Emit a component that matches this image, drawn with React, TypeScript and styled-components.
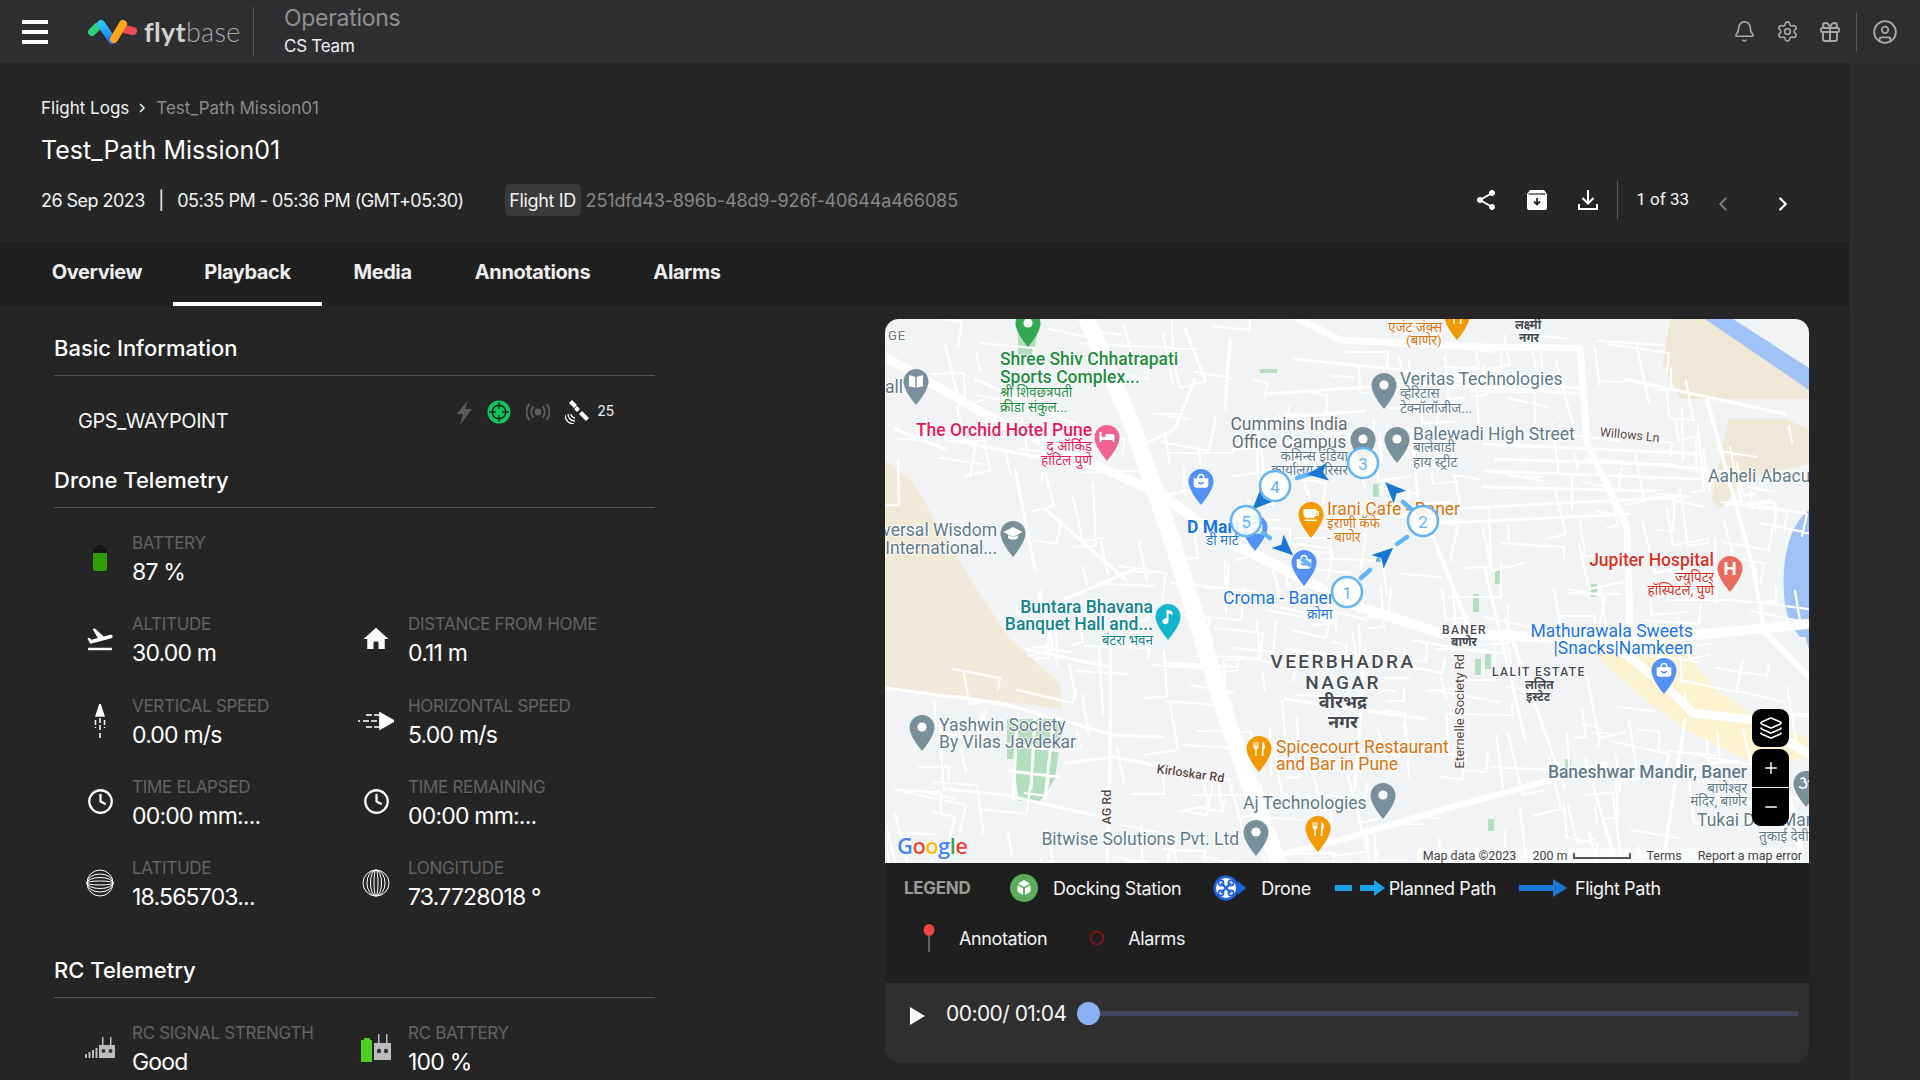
import React from "react";
import styled, { createGlobalStyle } from "styled-components";
import { Bell, Settings, Gift, CircleUser, Clock, Layers, Plus, Minus, ChevronLeft, ChevronRight } from "lucide-react";
import { MdShare, MdHome, MdFlightTakeoff } from "react-icons/md";

const Global = createGlobalStyle`
  html, body { margin: 0; padding: 0; background: #252525; overflow: hidden; }
  body { font-family: Inter, "Noto Sans", sans-serif; width: 1920px; height: 1080px; }
  * { box-sizing: border-box; }
`;

const Page = styled.div`width: 1920px; height: 1080px; overflow: hidden; display: flex; flex-direction: column; background: #2c2c2e;`;
const TopBar = styled.header`height: 63px; flex: none; background: #2e2e30; display: flex; align-items: center;`;
const Burger = styled.div`width: 26px; margin-left: 22px; display: flex; flex-direction: column; gap: 6px; & > i { display: block; height: 4px; background: #fff; }`;
const LogoBox = styled.div`margin-left: 40px; display: flex; align-items: center; width: 165px; gap: 6px;`;
const LogoText = styled.span`font-family: Lato, sans-serif; font-size: 27px; font-weight: 300; color: #a9a9a9; letter-spacing: 0.3px; b { font-weight: 700; color: #d2d2d2; }`;
const VDivider = styled.div<{ $h: number; $ml: number }>`width: 1px; height: ${p => p.$h}px; margin-left: ${p => p.$ml}px; background: #5a5a5a; flex: none;`;
const OrgBlock = styled.div`margin-left: 30px; display: flex; flex-direction: column; gap: 5px; margin-top: -2px;`;
const OrgTitle = styled.div`font-size: 23px; line-height: 26px; color: #8f8f8f; letter-spacing: -0.3px;`;
const OrgSub = styled.div`font-size: 17px; line-height: 20px; color: #f0f0f0; letter-spacing: -0.25px;`;
const TopIcons = styled.div`margin-left: auto; padding-right: 7px; display: flex; align-items: center; color: #a8a8a8;`;
const TopIcon = styled.div<{ $w: number }>`width: ${p => p.$w}px; display: flex; justify-content: center;`;

const Body = styled.div`flex: 1; display: flex; min-height: 0;`;
const Main = styled.main`width: 1849px; flex: none; background: #252525; display: flex; flex-direction: column;`;
const SubHeader = styled.section`height: 179px; flex: none; padding: 33px 51px 0 41px; background: #262626;`;
const Crumbs = styled.div`font-size: 17px; line-height: 24px; color: #f2f2f2; letter-spacing: 0; display: flex; align-items: center; gap: 10px; span { color: #8c8c8c; }`;
const Title = styled.h1`margin: 12px 0 0; font-size: 25px; line-height: 36px; font-weight: 400; color: #fff; letter-spacing: 0;`;
const InfoRow = styled.div`margin-top: 16px; height: 32px; display: flex; align-items: center; color: #f2f2f2; font-size: 18px; letter-spacing: -0.55px;`;
const Chip = styled.span`margin-left: 41px; height: 32px; width: 76px; display: flex; align-items: center; justify-content: center; background: #3a3a3a; border-radius: 5px; white-space: nowrap; letter-spacing: -0.35px;`;
const IdValue = styled.span`margin-left: 5px; color: #868686; letter-spacing: -0.13px;`;
const Actions = styled.div`margin-left: auto; display: flex; align-items: center; color: #fff;`;
const ActionIcon = styled.div`width: 51px; display: flex; justify-content: center;`;
const Pager = styled.span`font-family: Roboto, sans-serif; font-size: 17px; margin: 0 19px 0 18px; letter-spacing: 0; color: #f4f4f4; position: relative; top: -1px;`;
const PagerBtn = styled.div<{ $on?: boolean; $w: number; $ml?: number }>`width: ${p => p.$w}px; margin-left: ${p => p.$ml ?? 0}px; display: flex; justify-content: center; color: ${p => (p.$on ? "#fff" : "#777")}; position: relative; top: 4px;`;

const Tabs = styled.nav`height: 64px; flex: none; background: #1f1f1f; padding-left: 21px; display: flex;`;
const Tab = styled.div<{ $on?: boolean; $w: number }>`width: ${p => p.$w}px; display: flex; align-items: center; justify-content: center; font-size: 20px; font-weight: 700; color: #eee; letter-spacing: -0.4px; border-bottom: 4px solid ${p => (p.$on ? "#fff" : "transparent")};`;

const Content = styled.div`flex: 1; min-height: 0; display: grid; grid-template-columns: 885px 924px;`;
const LeftPanel = styled.section`padding: 24px 0 0 54px; width: 655px;`;
const SectionHead = styled.h2<{ $mt?: number }>`margin: ${p => p.$mt ?? 0}px 0 0; font-size: 22px; font-weight: 500; line-height: 36px; padding-bottom: 9px; color: #fff; letter-spacing: 0; border-bottom: 1px solid #555;`;
const ModeRow = styled.div`height: 86px; position: relative; display: flex; padding: 31px 0 0 24px; justify-content: space-between;`;
const ModeText = styled.div`font-size: 20px; line-height: 28px; color: #f5f5f5; letter-spacing: -0.45px;`;
const StatusIcons = styled.div`display: flex; align-items: center; height: 30px; gap: 15px; margin: -10px 41px 0 0; color: #fff;`;
const SatCount = styled.span`font-size: 14px; color: #eee; margin-left: -7px; letter-spacing: -0.2px; position: relative; top: -2px;`;
const Stats = styled.div`padding: 25px 0 0 22px; display: grid; grid-template-columns: 276px 1fr; grid-auto-rows: 81.33px;`;
const Stat = styled.div`display: flex;`;
const StatIcon = styled.div`width: 48px; height: 50px; margin: 0 8px 0 0; display: flex; align-items: center; justify-content: center; color: #fff; flex: none;`;
const StatLabel = styled.div`font-size: 17px; line-height: 20px; color: #636363; letter-spacing: -0.3px; white-space: nowrap;`;
const StatValue = styled.div`font-size: 23px; line-height: 30px; margin-top: 4px; color: #fff; letter-spacing: -0.8px; white-space: nowrap;`;

const RightPanel = styled.section`padding-top: 13px; display: flex; flex-direction: column;`;
const MapFrame = styled.div`height: 544px; position: relative; overflow: hidden; background: #f1f3f4; border-radius: 14px 14px 0 0; font-family: Roboto, "Noto Sans", "Noto Sans Devanagari", sans-serif;`;
const MapArt = styled.svg`position: absolute; inset: 0; display: block;`;
const halo = "-1px 0 1px #fff,1px 0 1px #fff,0 -1px 1px #fff,0 1px 1px #fff";
const MapLabel = styled.div<{ $x: number; $y: number; $c: string; $s: number; $a: string; $w: number; $rot: number; $sp: number }>`
  position: absolute; left: ${p => p.$x}px; top: ${p => p.$y - (p.$s >= 17 ? 1 : 3)}px; color: ${p => p.$c}; font-size: ${p => p.$s}px; font-weight: ${p => p.$w};
  line-height: 17px; white-space: nowrap; letter-spacing: ${p => p.$sp}px; text-shadow: ${halo};
  transform: translateX(${p => (p.$a === "r" ? "-100%" : p.$a === "c" ? "-50%" : "0")}) rotate(${p => p.$rot}deg);
  transform-origin: ${p => (p.$a === "r" ? "right" : "left")} center;
`;
const GoogleMark = styled.div`position: absolute; left: 12px; top: 513px; font-family: "Open Sans", sans-serif; font-size: 22px; font-weight: 600; letter-spacing: -0.6px; line-height: 26px; text-shadow: ${halo};`;
const G = styled.span<{ $c: string }>`color: ${p => p.$c};`;
const Attribution = styled.div`position: absolute; right: 7px; bottom: 0; height: 15px; display: flex; align-items: center; gap: 16px; font-size: 12.5px; color: #444; background: rgba(255,255,255,.55); padding-left: 6px;`;
const Scale = styled.span`display: flex; align-items: center; gap: 5px;`;
const ScaleBar = styled.i`display: block; width: 58px; height: 6px; border: 2px solid #555; border-top: 0;`;
const MapControls = styled.div`position: absolute; left: 867px; top: 390px; display: flex; flex-direction: column; gap: 2px;`;
const MapBtn = styled.div<{ $h: number; $r: string; $bb?: boolean; $mt?: number }>`width: 37px; height: ${p => p.$h}px; margin-top: ${p => p.$mt ?? 0}px; background: #000; border-radius: ${p => p.$r}; color: #fff; display: flex; align-items: center; justify-content: center; border-bottom: ${p => (p.$bb ? "1px solid #eee" : "0")};`;

const Legend = styled.div`height: 120px; flex: none; background: #1f1f1f; padding: 7px 0 0 19px; display: flex; flex-direction: column; font-size: 18px; color: #f5f5f5; letter-spacing: -0.4px;`;
const LegendRow = styled.div<{ $pl?: number; $mt?: number }>`height: 36px; display: flex; align-items: center; padding-left: ${p => p.$pl ?? 0}px; margin-top: ${p => p.$mt ?? 0}px;`;
const LegendHead = styled.span`font-weight: 700; font-size: 17px; color: #9a9a9a; letter-spacing: -0.3px; width: 106px;`;
const LegendItem = styled.span<{ $ml: number; $gap: number }>`display: flex; align-items: center; gap: ${p => p.$gap}px; margin-left: ${p => p.$ml}px; white-space: nowrap;`;
const Player = styled.div`height: 80px; flex: none; background: #2f2f2f; border-radius: 0 0 16px 16px; display: flex; align-items: center; padding: 0 10px 20px 25px;`;
const PlayMark = styled.svg`flex: none; margin-top: 5px;`;
const TimeText = styled.span`margin-left: 21px; width: 131px; font-size: 21px; color: #f5f5f5; letter-spacing: -0.55px; white-space: nowrap;`;
const Track = styled.div`flex: 1; height: 5px; background: #3f4659; border-radius: 3px; position: relative;`;
const Thumb = styled.div`position: absolute; left: 0; top: -9px; width: 23px; height: 23px; border-radius: 50%; background: #8ab0f5;`;
const SideStrip = styled.aside`flex: 1; background: #2c2c2e;`;

/* map data */
const pinPath = "M12.5 0C5.6 0 0 5.6 0 12.5 0 21.5 12.5 36 12.5 36S25 21.5 25 12.5C25 5.6 19.4 0 12.5 0Z";
type PinKind = "dot" | "book" | "bed" | "bag" | "cap" | "cup" | "fork" | "note" | "h" | "om";
const pins: [number, number, string, PinKind][] = [
  [143, 28, "#34a853", "dot"], [31, 86, "#78909c", "book"], [222, 142, "#f06292", "bed"], [316, 186, "#5491f5", "bag"],
  [128, 238, "#78909c", "cap"], [370, 232, "#5491f5", "bag"], [426, 219, "#f29900", "cup"], [419, 267, "#5491f5", "bag"],
  [283, 321, "#12b5cb", "note"], [572, 21, "#f29900", "fork"], [499, 90, "#78909c", "dot"], [478, 144, "#78909c", "dot"],
  [512, 144, "#78909c", "dot"], [845, 273, "#ea6a5e", "h"], [37, 432, "#78909c", "dot"], [374, 453, "#f29900", "fork"],
  [371, 537, "#78909c", "dot"], [433, 533, "#f29900", "fork"], [779, 375, "#5491f5", "bag"], [498, 500, "#78909c", "dot"],
  [921, 488, "#78909c", "om"],
];
const PinGlyph = ({ k }: { k: PinKind }) => {
  switch (k) {
    case "dot": return <circle cx="12.5" cy="12" r="4.6" fill="#fff" />;
    case "book": return <path d="M5.5 6.5c2.5 0 5 .5 6.3 1.6V19c-1.4-1-3.8-1.5-6.3-1.5ZM19.5 6.5c-2.5 0-5 .5-6.3 1.6V19c1.4-1 3.8-1.5 6.3-1.5Z" fill="#fff" />;
    case "bed": return <path d="M5 7h2v5h4V9h7a2 2 0 0 1 2 2v6h-2v-2H7v2H5Z" fill="#fff" />;
    case "bag": return <g fill="none" stroke="#fff" strokeWidth="1.6"><path d="M6 10h13v6a2 2 0 0 1-2 2H8a2 2 0 0 1-2-2Z" fill="#fff" /><path d="M9.5 10c0-6 6-6 6 0" /><path d="M10 13c.8 2.2 4.2 2.2 5 0" stroke="#5491f5" /></g>;
    case "cap": return <path d="M12.5 6 22 11l-9.5 5L3 11Zm-5 8v3c2.5 2 7.500 2 10 0v-3l-5 2.600Z" fill="#fff" />;
    case "cup": return <path d="M5 7h13v2h2.500v5H17c-.5 1.500-1.500 2-3 2H9c-3 0-4-2-4-4Zm13 3.500V13h1v-2.500ZM6 17.500h12V19H6Z" fill="#fff" />;
    case "fork": return <path d="M7 6h1v4h1V6h1v4h1V6h1v5c0 1.200-1 2-1.800 2.200V20H8.800v-6.800C8 13 7 12.200 7 11Zm9-.000c1.500 0 2.500 2 2.500 5 0 1.500-.8 2.500-1.500 2.800V20h-1.800Z" fill="#fff" />;
    case "note": return <path d="M11 6v8.500a3 3 0 1 0 2 2.800V9.500c1.500 0 3 .7 4 2V8c-1.500-1.500-3.500-2-6-2Z" fill="#fff" />;
    case "h": return <path d="M7 6h2.800v5h5.400V6H18v13h-2.800v-5.500H9.800V19H7Z" fill="#fff" />;
    case "om": return <path d="M7 8c3-2 6 0 4 3 3 0 3 6-1 6s-4-2-4-2M14 11c2-2 5 0 5 3s-2 4-3 3" fill="none" stroke="#fff" strokeWidth="1.700" />;
  }
};

type L = [string, number, number, string, number?, string?, number?, number?, number?];
const slate = "#5f7a8a";
const green = "#1e8e3e";
const pink = "#e8175d";
const orange = "#d9730d";
const blue = "#1a73e8";
const teal = "#12858e";
const red = "#d93025";
const brown = "#5b4343";
const ink = "#444b52";
const H = 13.5;
const labels: L[] = [
  ["GE", 3, 11, "#70757a", 13, "l", 400, 0, 1],
  ["all", 0, 61, slate, 17.5],
  ["Shree Shiv Chhatrapati", 115, 33, green, 17.5, "l", 500], ["Sports Complex...", 115, 51, green, 17.5, "l", 500],
  ["श्री शिवछत्रपती", 115, 68, green, H], ["क्रीडा संकुल...", 115, 83, green, H],
  ["The Orchid Hotel Pune", 207, 104, pink, 17.5, "r", 500],
  ["द ऑर्किड", 207, 122, pink, H, "r"], ["हॉटिल पुणे", 207, 136, pink, H, "r"],
  ["Cummins India", 404, 98, "#5f6d78", 17.5, "c"], ["Office Campus", 404, 116, "#5f6d78", 17.5, "c"],
  ["कमिन्स इंडिया", 463, 132, slate, H, "r"], ["कार्यालय परिसर", 463, 146, slate, H, "r"],
  ["versal Wisdom", 112, 204, slate, 17.5, "r"], ["(International...", 112, 222, slate, 17.5, "r"],
  ["D Mart", 302, 201, blue, 17.5, "l", 700], ["डी मार्ट", 321, 216, blue, H],
  ["Croma - Baner", 338, 272, blue, 17.5], ["क्रोमा", 422, 290, blue, H],
  ["Irani Cafe - Baner", 442, 183, orange, 17.5], ["इराणी कॅफे", 442, 199, orange, H], ["- बाणेर", 442, 213, orange, H],
  ["Buntara Bhavana", 268, 281, teal, 17.5, "r", 500], ["Banquet Hall and...", 268, 298, teal, 17.5, "r", 500], ["बंटरा भवन", 268, 316, teal, H, "r"],
  ["Veritas Technologies", 515, 53, slate, 17.5], ["व्हेरिटास", 515, 69, slate, H], ["टेक्नॉलॉजीज...", 515, 84, slate, H],
  ["Balewadi High Street", 528, 108, slate, 17.5], ["बालेवाडी", 528, 123, slate, H], ["हाय स्ट्रीट", 528, 138, slate, H],
  ["Willows Ln", 715, 107, brown, 12.5, "l", 400, 6],
  ["Aaheli Abacus", 823, 150, slate, 17.5],
  ["Jupiter Hospital", 829, 234, red, 17.5, "r", 500], ["ज्युपिटर", 829, 253, red, H, "r"], ["हॉस्पिटल, पुणे", 829, 266, red, H, "r"],
  ["एजंट जंक्स", 503, 3, orange, H], ["(बाणेर)", 521, 16, orange, H],
  ["लक्ष्मी", 630, 1, ink, 12, "l", 700], ["नगर", 634, 14, ink, 12, "l", 700],
  ["BANER", 557, 306, ink, 12, "l", 500, 0, 1.3], ["बाणेर", 566, 318, ink, 12, "l", 700],
  ["VEERBHADRA", 458, 335, ink, 19, "c", 500, 0, 2.4], ["NAGAR", 458, 356, ink, 19, "c", 500, 0, 2.4],
  ["वीरभद्र", 458, 375, ink, 18, "c", 700], ["नगर", 458, 395, ink, 18, "c", 700],
  ["Mathurawala Sweets", 808, 305, blue, 17.5, "r"], ["|Snacks|Namkeen", 808, 322, blue, 17.5, "r"],
  ["LALIT ESTATE", 607, 348, ink, 12, "l", 500, 0, 1.45], ["ललित", 640, 361, ink, 12, "l", 700], ["इस्टेट", 641, 373, ink, 12, "l", 700],
  ["Eternelle Society Rd", 574, 444, brown, 13, "l", 400, -90],
  ["Spicecourt Restaurant", 391, 421, orange, 17.5], ["and Bar in Pune", 391, 438, orange, 17.5],
  ["Yashwin Society", 54, 399, slate, 17.5], ["By Vilas Javdekar", 54, 416, slate, 17.5],
  ["Kirloskar Rd", 272, 444, brown, 12.5, "l", 500, 8],
  ["AG Rd", 221, 500, brown, 12.5, "l", 500, -90],
  ["Aj Technologies", 358, 477, slate, 17.5],
  ["Bitwise Solutions Pvt. Ltd", 354, 513, slate, 17.5, "r"],
  ["Baneshwar Mandir, Baner", 862, 446, slate, 17.5, "r", 500], ["बाणेश्वर", 862, 464, slate, H, "r"], ["मंदिर, बाणेर", 862, 477, slate, H, "r"],
  ["Tukai Devi Mandir", 812, 494, slate, 17.5], ["तुकाई देवी", 874, 512, slate, H],
];

/* deterministic street clutter */
function makeStreets(): string {
  let seed = 1337;
  const r = () => ((seed = (seed * 16807) % 2147483647) / 2147483647);
  let d = "";
  for (let i = 0; i < 420; i++) {
    const x = r() * 924, y = r() * 544;
    if ((x < 110 && y > 150 && y < 330) || (x > 820 && y < 80)) continue;
    const a = (r() < 0.5 ? 6 : 82) * (Math.PI / 180) + (r() - 0.5) * 0.25;
    const len = 14 + r() * 52;
    const x2 = x + Math.cos(a) * len, y2 = y + Math.sin(a) * len;
    d += `M${x.toFixed(0)} ${y.toFixed(0)}L${x2.toFixed(0)} ${y2.toFixed(0)}`;
    if (r() < 0.55) {
      const l2 = 10 + r() * 26, s = r() < 0.5 ? -1 : 1;
      d += `L${(x2 - s * Math.sin(a) * l2).toFixed(0)} ${(y2 + s * Math.cos(a) * l2).toFixed(0)}`;
    }
  }
  return d;
}
const streets = makeStreets();
const midStreets = "M598 125L818 135M610 140L790 146M600 152L815 160M598 168L770 172M560 190L800 178M540 205L745 195M700 140L820 150M740 60L900 95M510 62L700 75M410 40L700 70M380 75L600 60M380 100L480 92M350 130L470 118M0 369L120 385L228 416L278 418M181 444L228 438L345 461M226 301L225 441L222 544M140 330L226 348M60 470L120 476L226 500M400 330L520 345M400 380L540 400M600 250L640 420M620 300L680 470M700 440L730 540M800 400L780 530M480 330L470 470M90 60L190 105M60 120L215 150M10 110L60 130M130 150L150 250M160 190L240 260M180 280L250 250M250 130L290 110L310 60M300 10L320 60M345 20L340 90M132 404L128 480M150 400L146 470M168 405L160 480M122 425L178 432M125 452L175 458";

const Arrow = ({ x, y, a }: { x: number; y: number; a: number }) => (
  <path d="M11 0-10-9-5 0-10 9Z" fill="#1976d2" transform={`translate(${x} ${y}) rotate(${a})`} />
);
const Marker = ({ x, y, n }: { x: number; y: number; n: number }) => (
  <g>
    <circle cx={x} cy={y} r="15" fill="rgba(255,255,255,.88)" stroke="#64b5f6" strokeWidth="2.6" />
    <text x={x} y={y + 6.500} fontSize="17" textAnchor="middle" fill="#64b5f6" fontFamily="Roboto, sans-serif">{n}</text>
  </g>
);

const MapBase = () => (
  <MapArt width="924" height="544" viewBox="0 0 924 544">
    <path d="M0 141 28 163 85 260 125 320 175 365 177 390 100 380 0 368Z" fill="#f2ead9" />
    <path d="M785 0H822L924 50V80L795 80 778 45ZM844 100H900L924 110V145L860 160 835 190 826 180Z" fill="#f0e8d6" />
    <path d="M820 0H848L924 49V71Z" fill="#9fc2f7" />
    <path d="M924 191C905 205 895 240 900 285 903 300 905 306 912 306L924 300ZM905 305L924 300V318H915Z" fill="#9fc2f7" />
    <path d="M918 310H924V330Z" fill="#9fc2f7" />
    <path d="M700 320H790L830 370 868 395 924 420V440H860L820 420 800 410 760 380 720 345Z" fill="#fdf1c9" opacity=".85" />
    <path d="M133 8H153L149 36H133ZM122 400H178L170 460 155 482H134L128 440 122 440Z M375 50H392V54H375ZM488 165H494V178H488ZM600 335H606V350H600ZM610 250H615V265H610Z M590 340H596V356H590Z M588 275H594V293H588ZM706 265H712V278H706ZM680 440H686V452H680Z M603 500H609V512H603Z" fill="#a8dab5" opacity=".85" />
    <path d={streets} fill="none" stroke="#fff" strokeWidth="2.200" strokeLinecap="round" strokeLinejoin="round" />
    <path d={midStreets} fill="none" stroke="#fff" strokeWidth="3" strokeLinecap="round" strokeLinejoin="round" />
    <g fill="none" stroke="#fff" strokeLinecap="round" strokeLinejoin="round">
      <path d="M-5 35 100 95 195 140 242 160" strokeWidth="9" />
      <path d="M242 160 275 174 328 214 445 274 475 288 555 314 748 322 922 305" strokeWidth="10" />
      <path d="M408 -3 455 21 600 28 695 29 702 124 742 208 745 311" strokeWidth="7" />
      <path d="M722 321 782 368 808 394 868 401 925 436" strokeWidth="9" />
      <path d="M391 537 455 521 560 490 655 464 720 445" strokeWidth="6" />
      <path d="M878 311 924 358" strokeWidth="6" />
      <path d="M822 81 868 248 880 315M548 218 585 311" strokeWidth="4" />
      <path d="M200 -5 248 108 288 224 315 311 342 401 395 550" strokeWidth="17" />
    </g>
  </MapArt>
);

const MapOverlay = () => (
  <MapArt width="924" height="544" viewBox="0 0 924 544">
    {pins.map(([x, y, c, k], i) => (
      <g key={i} transform={`translate(${x - 12.500} ${y - 36})`}>
        <path d={pinPath} fill={c} />
        <PinGlyph k={k} />
      </g>
    ))}
  </MapArt>
);
const PathOverlay = () => (
  <MapArt width="924" height="544" viewBox="0 0 924 544">
    <g stroke="#64b5f6" strokeWidth="4.500" strokeLinecap="round">
      <path d="M476 259 485 251M512 225 522 218M493 241h.5M518 183 527 191M412 159 428 154M378 181h.5M378 214 385 219M418 241 425 246" />
    </g>
    <Arrow x={500} y={236} a={-42} />
    <Arrow x={508} y={171} a={-135} />
    <Arrow x={433} y={154} a={172} />
    <Arrow x={375} y={183} a={135} />
    <Arrow x={400} y={229} a={42} />
    <Marker x={462} y={273} n={1} />
    <Marker x={538} y={202} n={2} />
    <Marker x={478} y={144} n={3} />
    <Marker x={390} y={167} n={4} />
    <Marker x={361} y={202} n={5} />
  </MapArt>
);

const Logo = () => (
  <svg width="50" height="26" viewBox="0 0 50 26" fill="none" strokeWidth="8" strokeLinecap="round">
    <defs>
      <linearGradient id="lgb" x1="0" x2="0" y1="0" y2="1">
        <stop offset="0" stopColor="#29c8f0" />
        <stop offset="1" stopColor="#1e78ee" />
      </linearGradient>
    </defs>
    <path d="M4 13 9 8" stroke="#2fd07a" />
    <path d="M13 5 24 21" stroke="url(#lgb)" />
    <path d="M36 10 45 12" stroke="#ee4c55" />
    <path d="M26 20 35 5" stroke="#ffa41c" />
  </svg>
);
const ArchiveIcon = () => (
  <svg width="20" height="20" viewBox="0 0 20 20">
    <path d="M3 0h14l3 4v14a2 2 0 0 1-2 2H2a2 2 0 0 1-2-2V4Z" fill="#fff" />
    <path d="M1.500 4h17" stroke="#262626" strokeWidth="1.200" />
    <path d="M10 8v6M7 11.500l3 3 3-3" fill="none" stroke="#262626" strokeWidth="1.800" />
  </svg>
);
const DownloadIcon = () => (
  <svg width="20" height="20" viewBox="0 0 20 20" fill="none" stroke="#fff" strokeWidth="2">
    <path d="M10 0v13M4.500 8l5.500 5.500L15.500 8M1 14v5h18v-5" />
  </svg>
);
const Bolt = () => <svg width="15" height="25" viewBox="0 0 15 25"><path d="M11 0 0 14h6L3 25 15 9H8Z" fill="#5a5a5a" /></svg>;
const Target = () => (
  <svg width="24" height="24" viewBox="0 0 24 24">
    <circle cx="12" cy="12" r="11.500" fill="#12c45a" />
    <circle cx="12" cy="12" r="6.800" fill="none" stroke="#1c1c1c" strokeWidth="1.400" />
    <circle cx="12" cy="12" r="2.600" fill="#12c45a" />
    <path d="M12 2v7M12 15v7M2 12h7M15 12h7" stroke="#1c1c1c" strokeWidth="1.300" />
  </svg>
);
const Radio = () => (
  <svg width="24" height="18" viewBox="0 0 24 18" fill="none" stroke="#5f5f5f" strokeWidth="1.800">
    <circle cx="12" cy="9" r="2.500" fill="#5f5f5f" />
    <path d="M7.500 3.500c-3 3-3 8 0 11M16.500 3.500c3 3 3 8 0 11M3.500 1c-4 4-4 12 0 16M20.500 1c4 4 4 12 0 16" />
  </svg>
);
const Sat = () => (
  <svg width="24" height="24" viewBox="0 0 24 24">
    <path d="M4 3 7 0l5 5-3 3ZM9 9l3-3 3 3-3 3ZM14 14l3-3 7 7-3 3-7-7Z" fill="#fff" />
    <path d="M3 14c0 4 3 7 7 7M0 15c0 5 4 9 9 9M6 14c0 2 2 4 4 4" fill="none" stroke="#fff" strokeWidth="1.300" />
  </svg>
);
const BatteryIcon = () => (
  <svg width="14" height="26" viewBox="0 0 14 26">
    <path d="M4 0h6v3h2a2 2 0 0 1 2 2v3H0V5a2 2 0 0 1 2-2h2Z" fill="#151515" />
    <path d="M0 8h14v16a2 2 0 0 1-2 2H2a2 2 0 0 1-2-2Z" fill="#2e9e04" />
  </svg>
);
const VSpeed = () => (
  <svg width="14" height="34" viewBox="0 0 14 34" fill="none" stroke="#fff" strokeWidth="1.500">
    <path d="M7 0 11 12H3Z" fill="#fff" />
    <path d="M7 14v12M2.500 16v8M11.500 16v8" strokeDasharray="5 2" />
    <path d="M7 29v5" />
  </svg>
);
const HSpeed = () => (
  <svg width="36" height="18" viewBox="0 0 36 18" fill="none" stroke="#fff" strokeWidth="1.700">
    <path d="M36 9 22 17V1Z" fill="#fff" />
    <path d="M8 3h14M0 9h2M5 9h17M8 15h14" strokeDasharray="6 2" />
  </svg>
);
const GlobeLat = () => (
  <svg width="28" height="28" viewBox="0 0 28 28" fill="none" stroke="#fff" strokeWidth="1">
    <circle cx="14" cy="14" r="13" />
    <ellipse cx="14" cy="14" rx="13" ry="2" /><ellipse cx="14" cy="14" rx="13" ry="5.500" /><ellipse cx="14" cy="14" rx="13" ry="9" />
  </svg>
);
const GlobeLng = () => (
  <svg width="28" height="28" viewBox="0 0 28 28" fill="none" stroke="#fff" strokeWidth="1">
    <circle cx="14" cy="14" r="13" />
    <ellipse cx="14" cy="14" rx="2" ry="13" /><ellipse cx="14" cy="14" rx="5.500" ry="13" /><ellipse cx="14" cy="14" rx="9" ry="13" />
  </svg>
);
const RcSignal = () => (
  <svg width="30" height="22" viewBox="0 0 30 22" fill="#bcbcbc">
    <path d="M0 17h2v4H0ZM3.500 15h2v6h-2ZM7 13h2v8H7ZM10.500 11h2v10h-2Z" />
    <path d="M14 8h16v13H14Z" />
    <path d="M17 0h1.500v8H17ZM25 0h1.500v8H25Z" />
    <circle cx="18.500" cy="14" r="2" fill="#333" /><circle cx="25.500" cy="14" r="2" fill="#333" />
  </svg>
);
const RcBattery = () => (
  <svg width="30" height="28" viewBox="0 0 30 28">
    <path d="M3 4h6v2h2v22H0V6h3Z" fill="#4fcf26" />
    <path d="M13 9h17v17H13Z" fill="#bcbcbc" />
    <path d="M17 0h1.500v9H17ZM25 0h1.500v9H25Z" fill="#bcbcbc" />
    <circle cx="18" cy="17" r="2.200" fill="#333" /><circle cx="25" cy="17" r="2.200" fill="#333" />
  </svg>
);
const DockIcon = () => (
  <svg width="28" height="28" viewBox="0 0 28 28">
    <circle cx="14" cy="14" r="14" fill="#5cab5e" />
    <path d="M14 6 20 9.500 14 13 8 9.500ZM7.500 11l5.500 3.200V21L7.500 17.800ZM20.500 11 15 14.200V21l5.500-3.200Z" fill="#fff" />
  </svg>
);
const DroneIcon = () => (
  <svg width="34" height="28" viewBox="0 0 34 28">
    <path d="M25 7 33 14 25 21Z" fill="#1f62e0" />
    <circle cx="13" cy="14" r="12.500" fill="#1f62e0" />
    <circle cx="13" cy="14" r="10" fill="#fff" />
    <path d="M8 9 18 19M18 9 8 19" stroke="#1f62e0" strokeWidth="2.300" />
    <circle cx="8" cy="9" r="2.600" fill="none" stroke="#1f62e0" strokeWidth="1.700" /><circle cx="18" cy="9" r="2.600" fill="none" stroke="#1f62e0" strokeWidth="1.700" />
    <circle cx="8" cy="19" r="2.600" fill="none" stroke="#1f62e0" strokeWidth="1.700" /><circle cx="18" cy="19" r="2.600" fill="none" stroke="#1f62e0" strokeWidth="1.700" />
  </svg>
);
const PlannedIcon = () => (
  <svg width="50" height="18" viewBox="0 0 50 18" fill="#1fa3e8">
    <path d="M0 6h17v6H0ZM25 6h14V1l11 8-11 8v-5H25Z" />
  </svg>
);
const FlightIcon = () => (
  <svg width="48" height="18" viewBox="0 0 48 18" fill="#1976d2">
    <path d="M0 6h34V0l14 9-14 9v-6H0Z" />
  </svg>
);
const PinIcon = () => (
  <svg width="12" height="28" viewBox="0 0 12 28">
    <path d="M6 10v18" stroke="#777" strokeWidth="1.500" />
    <ellipse cx="6" cy="6" rx="5.500" ry="6" fill="#f04444" />
  </svg>
);
const AlarmIcon = () => (
  <svg width="16" height="16" viewBox="0 0 16 16"><circle cx="8" cy="8" r="6.500" fill="none" stroke="#8b1515" strokeWidth="1.600" /></svg>
);

const StatBlock = ({ icon, label, value }: { icon: React.ReactNode; label: string; value: string }) => (
  <Stat>
    <StatIcon>{icon}</StatIcon>
    <div>
      <StatLabel>{label}</StatLabel>
      <StatValue>{value}</StatValue>
    </div>
  </Stat>
);

export default function App() {
  return (
    <Page>
      <Global />
      <TopBar>
        <Burger><i /><i /><i /></Burger>
        <LogoBox>
          <Logo />
          <LogoText><b>flyt</b>base</LogoText>
        </LogoBox>
        <VDivider $h={49} $ml={0} />
        <OrgBlock>
          <OrgTitle>Operations</OrgTitle>
          <OrgSub>CS Team</OrgSub>
        </OrgBlock>
        <TopIcons>
          <TopIcon $w={43}><Bell size={23} strokeWidth={1.7} /></TopIcon>
          <TopIcon $w={43}><Settings size={23} strokeWidth={1.7} /></TopIcon>
          <TopIcon $w={41}><Gift size={24} strokeWidth={1.9} /></TopIcon>
          <VDivider $h={38} $ml={6} />
          <TopIcon $w={56}><CircleUser size={26} strokeWidth={1.7} /></TopIcon>
        </TopIcons>
      </TopBar>
      <Body>
        <Main>
          <SubHeader>
            <Crumbs>Flight Logs <svg width="7" height="10" viewBox="0 0 7 10"><path d="M1 1l4 4-4 4" fill="none" stroke="#eee" strokeWidth="1.500" /></svg> <span>Test_Path Mission01</span></Crumbs>
            <Title>Test_Path Mission01</Title>
            <InfoRow>
              26 Sep 2023&nbsp;&nbsp;&nbsp;|&nbsp;&nbsp;&nbsp;05:35 PM - 05:36 PM (GMT+05:30)
              <Chip>Flight ID</Chip>
              <IdValue>251dfd43-896b-48d9-926f-40644a466085</IdValue>
              <Actions>
                <ActionIcon><MdShare size={24} /></ActionIcon>
                <ActionIcon><ArchiveIcon /></ActionIcon>
                <ActionIcon><DownloadIcon /></ActionIcon>
                <VDivider $h={38} $ml={4} />
                <Pager>1 of 33</Pager>
                <PagerBtn $w={30}><ChevronLeft size={22} strokeWidth={2.4} /></PagerBtn>
                <PagerBtn $on $w={30} $ml={30}><ChevronRight size={22} strokeWidth={2.6} /></PagerBtn>
              </Actions>
            </InfoRow>
          </SubHeader>
          <Tabs>
            <Tab $w={152}>Overview</Tab>
            <Tab $on $w={149}>Playback</Tab>
            <Tab $w={121}>Media</Tab>
            <Tab $w={179}>Annotations</Tab>
            <Tab $w={130}>Alarms</Tab>
          </Tabs>
          <Content>
            <LeftPanel>
              <SectionHead>Basic Information</SectionHead>
              <ModeRow>
                <ModeText>GPS_WAYPOINT</ModeText>
                <StatusIcons>
                  <Bolt />
                  <Target />
                  <Radio />
                  <Sat />
                  <SatCount>25</SatCount>
                </StatusIcons>
              </ModeRow>
              <SectionHead>Drone Telemetry</SectionHead>
              <Stats>
                <StatBlock icon={<BatteryIcon />} label="BATTERY" value="87 %" />
                <div />
                <StatBlock icon={<MdFlightTakeoff size={30} />} label="ALTITUDE" value="30.00 m" />
                <StatBlock icon={<MdHome size={30} />} label="DISTANCE FROM HOME" value="0.11 m" />
                <StatBlock icon={<VSpeed />} label="VERTICAL SPEED" value="0.00 m/s" />
                <StatBlock icon={<HSpeed />} label="HORIZONTAL SPEED" value="5.00 m/s" />
                <StatBlock icon={<Clock size={27} strokeWidth={2} />} label="TIME ELAPSED" value="00:00 mm:..." />
                <StatBlock icon={<Clock size={27} strokeWidth={2} />} label="TIME REMAINING" value="00:00 mm:..." />
                <StatBlock icon={<GlobeLat />} label="LATITUDE" value="18.565703..." />
                <StatBlock icon={<GlobeLng />} label="LONGITUDE" value="73.7728018 °" />
              </Stats>
              <SectionHead $mt={12}>RC Telemetry</SectionHead>
              <Stats>
                <StatBlock icon={<RcSignal />} label="RC SIGNAL STRENGTH" value="Good" />
                <StatBlock icon={<RcBattery />} label="RC BATTERY" value="100 %" />
              </Stats>
            </LeftPanel>
            <RightPanel>
              <MapFrame>
                <MapBase />
                <MapOverlay />
                {labels.map(([t, x, y, c, s = 16, a = "l", w = 400, rot = 0, sp = 0], i) => (
                  <MapLabel key={i} $x={x} $y={y} $c={c} $s={s} $a={a} $w={w} $rot={rot} $sp={sp}>{t}</MapLabel>
                ))}
                <PathOverlay />
                <GoogleMark><G $c="#4285f4">G</G><G $c="#ea4335">o</G><G $c="#fbbc05">o</G><G $c="#4285f4">g</G><G $c="#34a853">l</G><G $c="#ea4335">e</G></GoogleMark>
                <Attribution>
                  <span>Map data ©2023</span>
                  <Scale>200 m <ScaleBar /></Scale>
                  <span>Terms</span>
                  <span>Report a map error</span>
                </Attribution>
                <MapControls>
                  <MapBtn $h={38} $r="9px"><Layers size={24} strokeWidth={1.6} /></MapBtn>
                  <MapBtn $h={39} $r="9px 9px 0 0" $bb><Plus size={18} /></MapBtn>
                  <MapBtn $h={38} $r="0 0 9px 9px" $mt={-2}><Minus size={18} /></MapBtn>
                </MapControls>
              </MapFrame>
              <Legend>
                <LegendRow>
                  <LegendHead>LEGEND</LegendHead>
                  <LegendItem $ml={0} $gap={15}><DockIcon />Docking Station</LegendItem>
                  <LegendItem $ml={32} $gap={14}><DroneIcon />Drone</LegendItem>
                  <LegendItem $ml={24} $gap={4}><PlannedIcon />Planned Path</LegendItem>
                  <LegendItem $ml={23} $gap={8}><FlightIcon />Flight Path</LegendItem>
                </LegendRow>
                <LegendRow $pl={19} $mt={14}>
                  <LegendItem $ml={0} $gap={24}><PinIcon />Annotation</LegendItem>
                  <LegendItem $ml={42} $gap={23}><AlarmIcon />Alarms</LegendItem>
                </LegendRow>
              </Legend>
              <Player>
                <PlayMark width="15" height="18" viewBox="0 0 15 18"><path d="M0 0 15 9 0 18Z" fill="#fff" /></PlayMark>
                <TimeText>00:00/ 01:04</TimeText>
                <Track><Thumb /></Track>
              </Player>
            </RightPanel>
          </Content>
        </Main>
        <SideStrip />
      </Body>
    </Page>
  );
}
